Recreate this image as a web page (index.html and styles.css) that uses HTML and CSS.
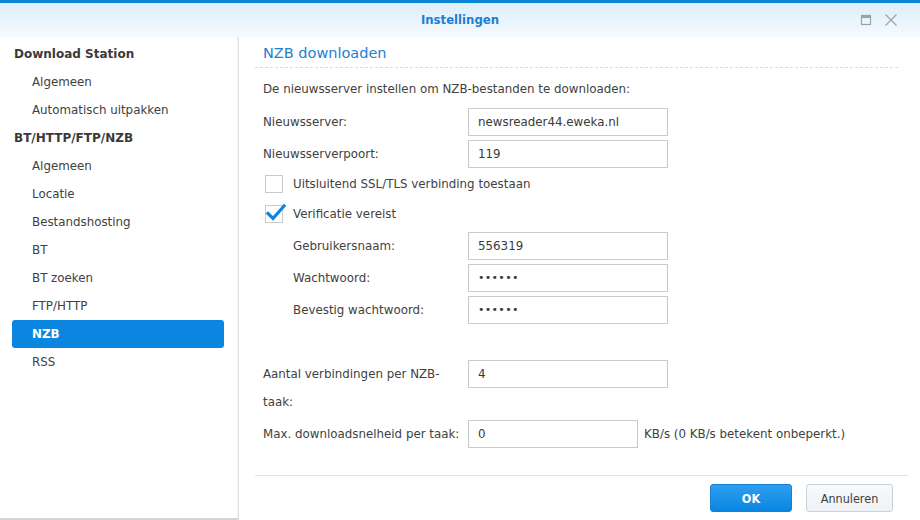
FILE: index.html
```html
<!DOCTYPE html>
<html lang="nl">
<head>
<meta charset="utf-8">
<title>Instellingen</title>
<link rel="stylesheet" href="styles.css">
</head>
<body>
<div class="window">
  <div class="topline"></div>
  <header class="titlebar">
    <div></div>
    <div class="title">Instellingen</div>
    <div class="winbtns">
      <svg class="ico" width="12" height="12" viewBox="0 0 12 12"><rect x="1.5" y="1.5" width="9" height="9" fill="none" stroke="#9aa2aa" stroke-width="1.2"/><rect x="1" y="1" width="10" height="3" fill="#9aa2aa"/></svg>
      <svg class="ico" width="14" height="14" viewBox="0 0 14 14"><path d="M1.5 1.5 L12.5 12.5 M12.5 1.5 L1.5 12.5" stroke="#a0a7ae" stroke-width="1.4" fill="none"/></svg>
    </div>
  </header>
  <div class="body">
    <nav class="sidebar">
      <div class="group">Download Station</div>
      <div class="item">Algemeen</div>
      <div class="item">Automatisch uitpakken</div>
      <div class="group">BT/HTTP/FTP/NZB</div>
      <div class="item">Algemeen</div>
      <div class="item">Locatie</div>
      <div class="item">Bestandshosting</div>
      <div class="item">BT</div>
      <div class="item">BT zoeken</div>
      <div class="item">FTP/HTTP</div>
      <div class="item selected">NZB</div>
      <div class="item">RSS</div>
    </nav>
    <main class="main">
      <div class="content">
        <h1 class="heading">NZB downloaden</h1>
        <p class="desc">De nieuwsserver instellen om NZB-bestanden te downloaden:</p>
        <div class="row r-first">
          <label class="lbl">Nieuwsserver:</label>
          <div class="input">newsreader44.eweka.nl</div>
        </div>
        <div class="row">
          <label class="lbl">Nieuwsserverpoort:</label>
          <div class="input">119</div>
        </div>
        <div class="check r-check1">
          <span class="box"></span>
          <span>Uitsluitend SSL/TLS verbinding toestaan</span>
        </div>
        <div class="check">
          <span class="box">
            <svg class="tick" width="22" height="20" viewBox="0 0 22 20"><path d="M3 10.5 L8 15.5 L19 3" fill="none" stroke="#0a86e0" stroke-width="3.2" stroke-linecap="square"/></svg>
          </span>
          <span>Verificatie vereist</span>
        </div>
        <div class="row sub r-sub1">
          <label class="lbl">Gebruikersnaam:</label>
          <div class="input">556319</div>
        </div>
        <div class="row sub">
          <label class="lbl">Wachtwoord:</label>
          <div class="input dots">••••••</div>
        </div>
        <div class="row sub">
          <label class="lbl">Bevestig wachtwoord:</label>
          <div class="input dots">••••••</div>
        </div>
        <div class="row tall r-conn">
          <label class="lbl">Aantal verbindingen per NZB-taak:</label>
          <div class="input">4</div>
        </div>
        <div class="row">
          <label class="lbl">Max. downloadsnelheid per taak:</label>
          <div class="input short">0</div>
          <span class="unit">KB/s (0 KB/s betekent onbeperkt.)</span>
        </div>
      </div>
      <footer class="footer">
        <button class="btn ok">OK</button>
        <button class="btn cancel">Annuleren</button>
      </footer>
    </main>
  </div>
</div>
</body>
</html>
```
FILE: styles.css
```css
* { box-sizing: border-box; }
html, body { margin: 0; padding: 0; }
body {
  width: 920px;
  height: 520px;
  overflow: hidden;
  background: #ffffff;
  font-family: "DejaVu Sans", Verdana, sans-serif;
  font-size: 11.85px;
  color: #414141;
}
.window { width: 920px; height: 520px; display: flex; flex-direction: column; }
.topline { height: 3px; background: #0a86d9; flex: none; }
.titlebar {
  height: 34px;
  flex: none;
  display: grid;
  grid-template-columns: 1fr auto 1fr;
  align-items: center;
  background: linear-gradient(#ddeefb, #f6fafe);
}
.title {
  font-family: "DejaVu Sans Condensed", "DejaVu Sans", sans-serif;
  font-stretch: condensed;
  font-weight: bold;
  font-size: 13px;
  color: #1b7fd4;
  padding-bottom: 1px;
}
.winbtns {
  justify-self: end;
  display: flex;
  align-items: center;
  gap: 12px;
  padding-right: 22px;
  padding-bottom: 1px;
}
.ico { display: block; }
.body { flex: 1; display: flex; min-height: 0; }
.sidebar {
  width: 239px;
  flex: none;
  padding-top: 3px;
  border-right: 1px solid #dde1e5;
  border-bottom: 2px solid #d4d4d4;
  box-shadow: inset -2px 0 2px -1px #eef0f2;
  background: #fff;
}
.group {
  height: 28px;
  line-height: 28px;
  padding-left: 14px;
  font-weight: bold;
  font-size: 12px;
  color: #3a3a3a;
}
.item {
  height: 28px;
  line-height: 28px;
  margin: 0 14px 0 12px;
  padding-left: 20px;
  color: #414141;
  border-radius: 3px;
}
.item.selected {
  background: #0a86e0;
  color: #ffffff;
  font-weight: bold;
}
.main {
  flex: 1;
  display: flex;
  flex-direction: column;
  padding: 2px 12px 0 16px;
}
.content { flex: 1; padding-left: 8px; padding-right: 10px; }
.heading {
  margin: 0 0 0 -8px;
  padding-left: 8px;
  height: 29px;
  line-height: 28px;
  font-size: 14.5px;
  font-weight: normal;
  color: #2580d2;
  border-bottom: 1px dashed #dcdcdc;
}
.desc { margin: 7px 0 0; line-height: 28px; }
.row { display: flex; align-items: center; margin-top: 4px; }
.r-first { margin-top: 5px; }
.lbl { width: 205px; flex: none; line-height: 28px; }
.row.sub .lbl { width: 175px; margin-left: 30px; }
.input {
  width: 200px;
  height: 28px;
  line-height: 26px;
  border: 1px solid #c9c9c9;
  padding: 0 9px;
  color: #3a3a3a;
  background: #fff;
}
.input.short { width: 170px; }
.input.dots { font-size: 11px; letter-spacing: 0.3px; }
.unit { margin-left: 6px; }
.row.tall { align-items: flex-start; margin-top: 36px; }
.row.tall .lbl { width: 200px; margin-right: 5px; }
.check {
  display: flex;
  align-items: center;
  height: 30px;
}
.r-check1 { margin-top: 1px; }
.check .box {
  position: relative;
  width: 18px;
  height: 18px;
  border: 1px solid #c9c9c9;
  margin-left: 2px;
  margin-right: 10px;
  flex: none;
  background: #fff;
}
.tick { position: absolute; left: -1px; top: -3px; }
.r-sub1 { margin-top: 3px; }
.footer {
  height: 45px;
  flex: none;
  border-top: 1px solid #e3e3e3;
  display: flex;
  justify-content: flex-end;
  align-items: flex-start;
  gap: 14px;
  padding: 8px 15px 0 0;
}
.btn {
  height: 28px;
  border-radius: 3px;
  font-family: "DejaVu Sans Condensed", "DejaVu Sans", sans-serif;
  font-stretch: condensed;
  font-size: 12.5px;
  cursor: pointer;
}
.btn.ok {
  width: 82px;
  background: linear-gradient(#2d9ff0, #0a86e0);
  border: 1px solid #1281d6;
  color: #fff;
  font-weight: bold;
}
.btn.cancel {
  width: 87px;
  background: linear-gradient(#f8fafc, #eef2f6);
  border: 1px solid #c8d0d8;
  color: #414141;
}
```
